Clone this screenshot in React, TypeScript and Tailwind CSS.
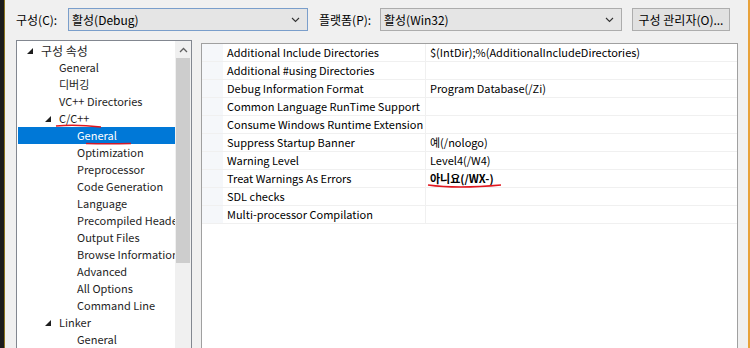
import React from "react";

const FONT = "font-['Noto_Sans_CJK_KR','Noto_Sans',sans-serif]";

type Node = { label: string; level: number; open?: boolean; selected?: boolean };

const treeItems: Node[] = [
  { label: "구성 속성", level: 0, open: true },
  { label: "General", level: 1 },
  { label: "디버깅", level: 1 },
  { label: "VC++ Directories", level: 1 },
  { label: "C/C++", level: 1, open: true },
  { label: "General", level: 2, selected: true },
  { label: "Optimization", level: 2 },
  { label: "Preprocessor", level: 2 },
  { label: "Code Generation", level: 2 },
  { label: "Language", level: 2 },
  { label: "Precompiled Headers", level: 2 },
  { label: "Output Files", level: 2 },
  { label: "Browse Information", level: 2 },
  { label: "Advanced", level: 2 },
  { label: "All Options", level: 2 },
  { label: "Command Line", level: 2 },
  { label: "Linker", level: 1, open: true },
  { label: "General", level: 2 },
  { label: "Input", level: 2 },
];

const props: { name: string; value: string; bold?: boolean }[] = [
  { name: "Additional Include Directories", value: "$(IntDir);%(AdditionalIncludeDirectories)" },
  { name: "Additional #using Directories", value: "" },
  { name: "Debug Information Format", value: "Program Database(/Zi)" },
  { name: "Common Language RunTime Support", value: "" },
  { name: "Consume Windows Runtime Extension", value: "" },
  { name: "Suppress Startup Banner", value: "예(/nologo)" },
  { name: "Warning Level", value: "Level4(/W4)" },
  { name: "Treat Warnings As Errors", value: "아니요(/WX-)", bold: true },
  { name: "SDL checks", value: "" },
  { name: "Multi-processor Compilation", value: "" },
];

// ---------------------- little expanded-node triangle ----------------------
const Expander = () => (
  <svg width="6" height="6" viewBox="0 0 6 6" className="shrink-0">
    <polygon points="6,0 6,6 0,6" fill="#1e1e1e" />
  </svg>
);

const Chevron = () => (
  <svg width="9" height="6" viewBox="0 0 9 6" className="shrink-0">
    <polyline points="1,1 4.5,4.5 8,1" fill="none" stroke="#333" strokeWidth="1.1" />
  </svg>
);

const Combo = ({ text, width, focused }: { text: string; width: string; focused?: boolean }) => (
  <div
    className={`${width} h-[23px] flex items-center justify-between pl-[3px] pr-[7px] border bg-[#e5e5e5] ${
      focused ? "border-[#7a9ecb]" : "border-[#acacac]"
    }`}
  >
    <span className="text-[12px] text-black">{text}</span>
    <Chevron />
  </div>
);

const App = () => {
  return (
    <div className={`w-[750px] h-[348px] overflow-hidden flex bg-[#f0f0f0] ${FONT}`}>
      {/* dark editor edge on the left */}
      <div className="w-[4px] h-full bg-[#1c1c1c] shrink-0" />
      <div className="w-[1px] h-full bg-[#8a7420] shrink-0" />

      <div className="flex-1 flex flex-col">
        {/* ---------------------- top bar ---------------------- */}
        <div className="flex items-center mt-[8px] h-[23px] pl-[11px]">
          <span className="w-[52px] text-[12px] text-black">구성(C):</span>
          <Combo text="활성(Debug)" width="w-[240px]" focused />
          <span className="ml-[11px] w-[61px] text-[12px] text-black">플랫폼(P):</span>
          <Combo text="활성(Win32)" width="w-[242px]" />
          <div className="ml-[10px] w-[98px] h-[23px] flex items-center justify-center border border-[#adadad] bg-[#e1e1e1] text-[12px] text-black">
            구성 관리자(O)...
          </div>
        </div>

        {/* ---------------------- body ---------------------- */}
        <div className="flex flex-1 mt-[9px] pl-[11px]">
          {/* tree */}
          <div className="relative w-[176px] h-[320px] border border-[#828790] bg-white flex">
            <div className="flex-1 min-w-0 pt-[1px] pl-[1px] overflow-hidden">
              {treeItems.map((n, i) => (
                <div
                  key={i}
                  className={`h-[17px] flex items-center whitespace-nowrap text-[11px] ${
                    n.selected ? "bg-[#0078d7] text-white" : "text-[#1e1e1e]"
                  }`}
                  style={{ paddingLeft: 9 + n.level * 18 }}
                >
                  <span className="w-[14px] shrink-0 flex items-center">{n.open ? <Expander /> : null}</span>
                  <span className={`shrink-0 ${n.level === 0 ? "text-[12px]" : ""}`}>{n.label}</span>
                </div>
              ))}
            </div>
            {/* scrollbar */}
            <div className="w-[16px] shrink-0 h-full bg-[#f0f0f0] flex flex-col items-center">
              <div className="h-[17px] flex items-center justify-center">
                <svg width="9" height="6" viewBox="0 0 9 6">
                  <polyline points="1,5 4.5,1.5 8,5" fill="none" stroke="#606060" strokeWidth="1.3" />
                </svg>
              </div>
              <div className="w-[14px] h-[205px] bg-[#cdcdcd]" />
            </div>
            {/* red hand-drawn marks */}
            <svg className="absolute left-[38px] top-[82px]" width="48" height="6" viewBox="0 0 48 6">
              <path d="M1 3 Q 20 1 46 4" fill="none" stroke="#e0161e" strokeWidth="1.6" />
            </svg>
            <svg className="absolute left-[68px] top-[100px]" width="48" height="5" viewBox="0 0 48 5">
              <path d="M1 2.5 Q 22 3 46 2.5" fill="none" stroke="#d0182a" strokeWidth="1.6" />
            </svg>
          </div>

          {/* property grid */}
          <div className="relative ml-[9px] mt-[3px] w-[537px] h-[320px] border border-[#a0a0a0] bg-white">
            {props.map((p, i) => (
              <div key={i} className="flex h-[18px] border-b border-[#f0f0f0]">
                <div className="w-[21px] bg-[#f5f7fa]" />
                <div className="w-[203px] pl-[4px] flex items-center border-r border-[#f0f0f0] text-[11px] text-black whitespace-nowrap overflow-hidden">
                  {p.name}
                </div>
                <div
                  className={`flex-1 pl-[4px] flex items-center text-[11px] text-black whitespace-nowrap ${
                    p.bold ? "font-bold" : ""
                  }`}
                >
                  {p.value}
                </div>
              </div>
            ))}
            <svg className="absolute left-[225px] top-[139px]" width="76" height="6" viewBox="0 0 76 6">
              <path d="M1 2 Q 30 6 74 2" fill="none" stroke="#e0161e" strokeWidth="1.6" />
            </svg>
          </div>
        </div>
      </div>

      <div className="w-[9px] h-full shrink-0" />
      <div className="w-[2px] h-full bg-[#e8a23a] shrink-0" />
    </div>
  );
};

export default App;
